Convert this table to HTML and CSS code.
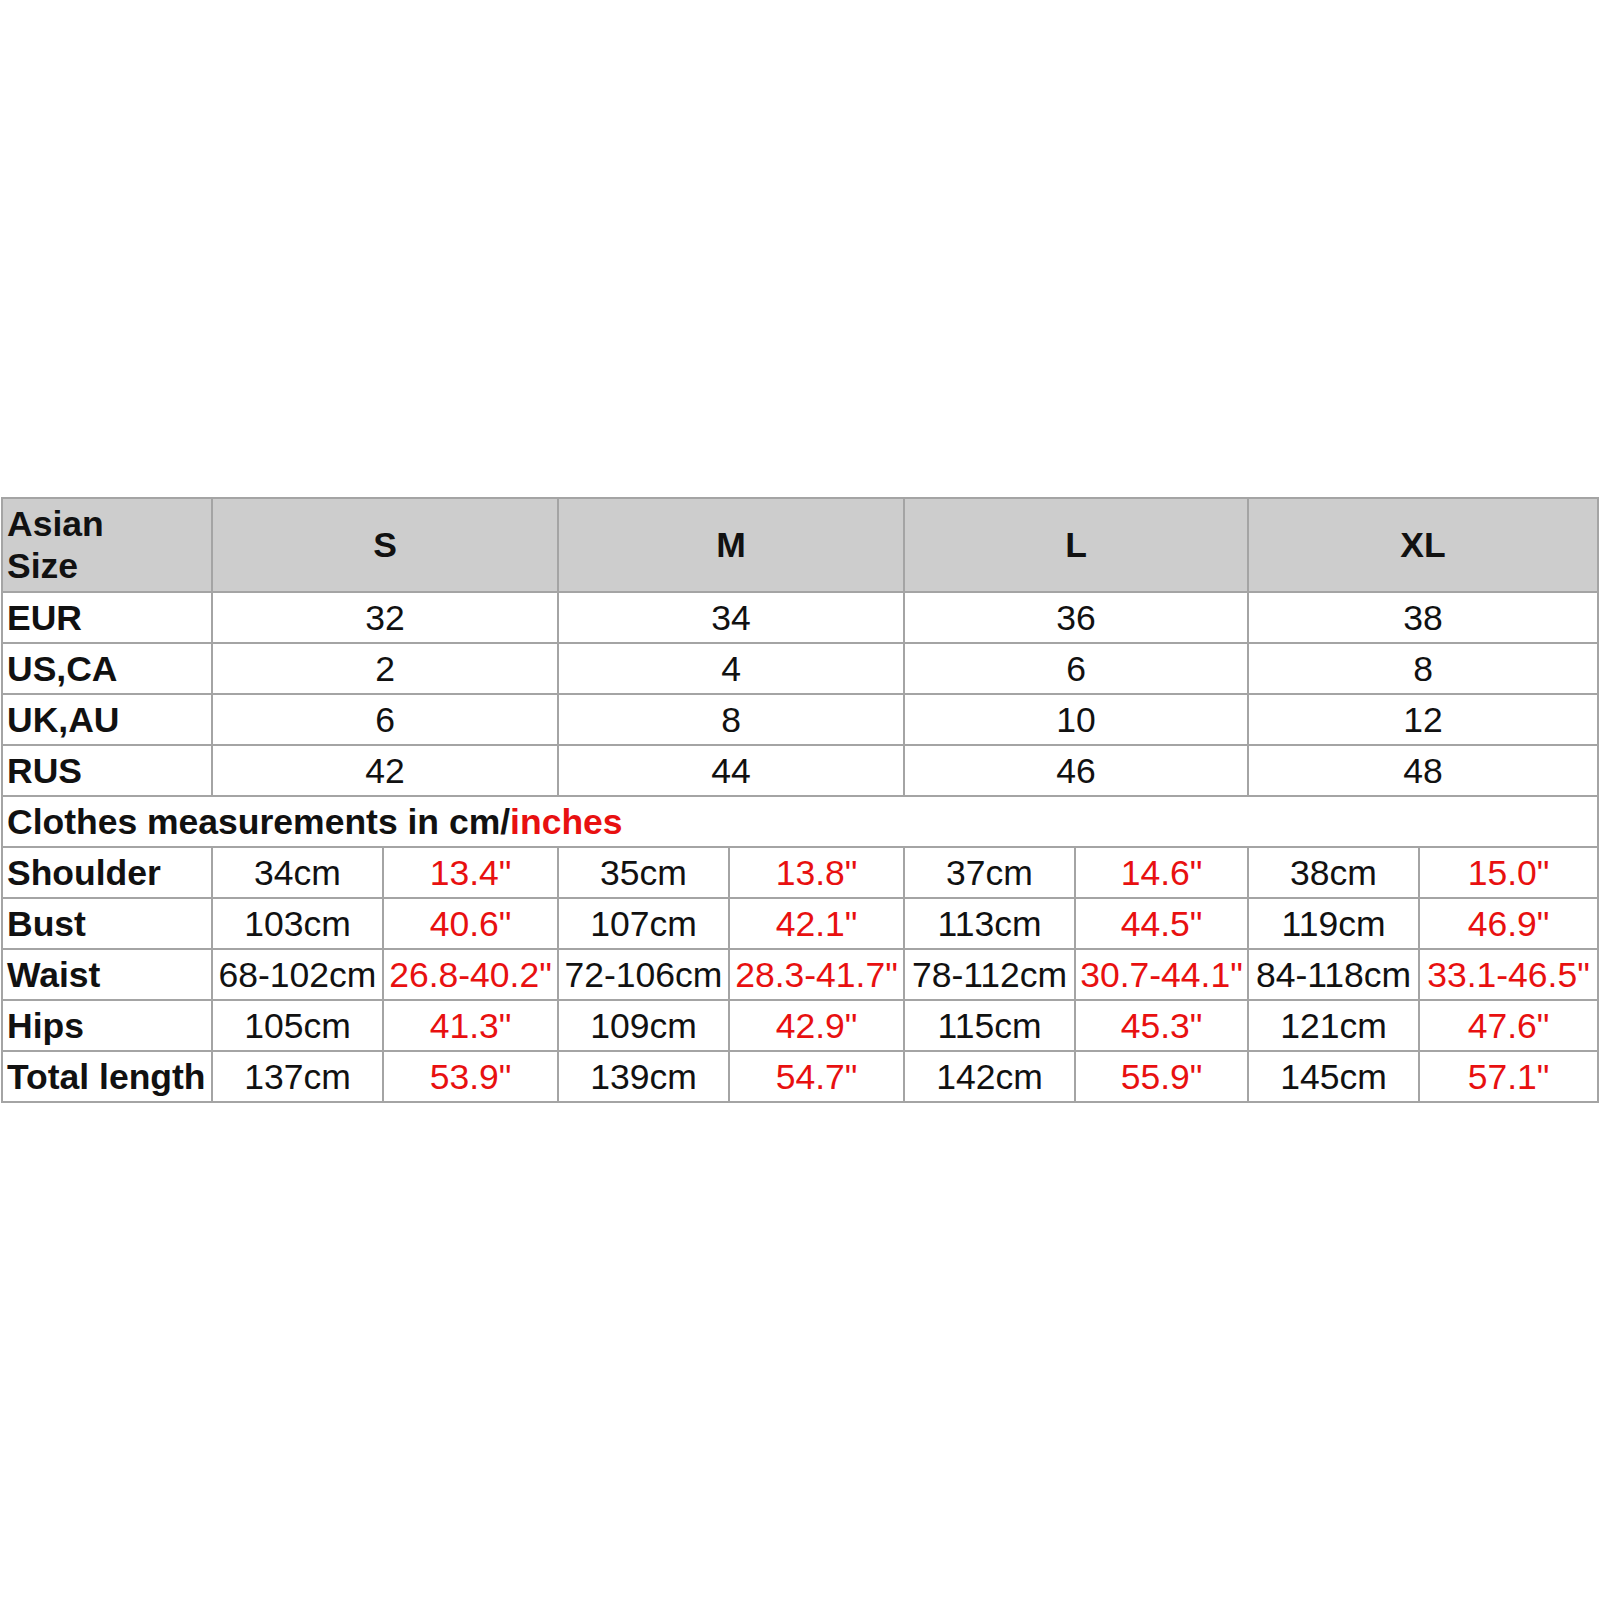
FILE: index.html
```html
<!DOCTYPE html>
<html>
<head>
<meta charset="utf-8">
<link rel="stylesheet" href="styles.css">
</head>
<body>
<div class="page">
<table class="chart">
<colgroup>
<col class="c-label"><col class="c-a"><col class="c-b"><col class="c-a"><col class="c-b"><col class="c-a"><col class="c-c"><col class="c-a"><col class="c-d">
</colgroup>
<tr class="head">
<td class="label">Asian<br>Size</td>
<td colspan="2" class="size">S</td>
<td colspan="2" class="size">M</td>
<td colspan="2" class="size">L</td>
<td colspan="2" class="size">XL</td>
</tr>
<tr><td class="label">EUR</td><td colspan="2">32</td><td colspan="2">34</td><td colspan="2">36</td><td colspan="2">38</td></tr>
<tr><td class="label">US,CA</td><td colspan="2">2</td><td colspan="2">4</td><td colspan="2">6</td><td colspan="2">8</td></tr>
<tr><td class="label">UK,AU</td><td colspan="2">6</td><td colspan="2">8</td><td colspan="2">10</td><td colspan="2">12</td></tr>
<tr><td class="label">RUS</td><td colspan="2">42</td><td colspan="2">44</td><td colspan="2">46</td><td colspan="2">48</td></tr>
<tr><td class="label" colspan="9">Clothes measurements in cm/<span class="red">inches</span></td></tr>
<tr><td class="label">Shoulder</td><td>34cm</td><td class="red">13.4"</td><td>35cm</td><td class="red">13.8"</td><td>37cm</td><td class="red">14.6"</td><td>38cm</td><td class="red">15.0"</td></tr>
<tr><td class="label">Bust</td><td>103cm</td><td class="red">40.6"</td><td>107cm</td><td class="red">42.1"</td><td>113cm</td><td class="red">44.5"</td><td>119cm</td><td class="red">46.9"</td></tr>
<tr><td class="label">Waist</td><td>68-102cm</td><td class="red">26.8-40.2"</td><td>72-106cm</td><td class="red">28.3-41.7"</td><td>78-112cm</td><td class="red">30.7-44.1"</td><td>84-118cm</td><td class="red">33.1-46.5"</td></tr>
<tr><td class="label">Hips</td><td>105cm</td><td class="red">41.3"</td><td>109cm</td><td class="red">42.9"</td><td>115cm</td><td class="red">45.3"</td><td>121cm</td><td class="red">47.6"</td></tr>
<tr><td class="label">Total length</td><td>137cm</td><td class="red">53.9"</td><td>139cm</td><td class="red">54.7"</td><td>142cm</td><td class="red">55.9"</td><td>145cm</td><td class="red">57.1"</td></tr>
</table>
</div>
</body>
</html>
```

FILE: styles.css
```css
html, body {
  margin: 0;
  padding: 0;
  background: #ffffff;
}
.page {
  padding: 497px 0 0 1px;
}
.chart {
  border-collapse: collapse;
  table-layout: fixed;
  width: 1596px;
  font-family: "Liberation Sans", Arial, sans-serif;
  font-size: 35.5px;
  color: #111111;
}
.c-label { width: 210px; }
.c-a { width: 171px; }
.c-b { width: 175px; }
.c-c { width: 173px; }
.c-d { width: 179px; }
.chart td {
  border: 2px solid #a4a4a4;
  height: 49px;
  padding: 0;
  text-align: center;
  vertical-align: middle;
  white-space: nowrap;
  line-height: 40px;
}
.chart tr.head td {
  height: 92px;
  background: #cdcdcd;
  line-height: 42px;
}
.chart td.label {
  text-align: left;
  padding-left: 4px;
  font-weight: bold;
}
.chart td.size {
  font-weight: bold;
}
.red {
  color: #e81010;
}
```
